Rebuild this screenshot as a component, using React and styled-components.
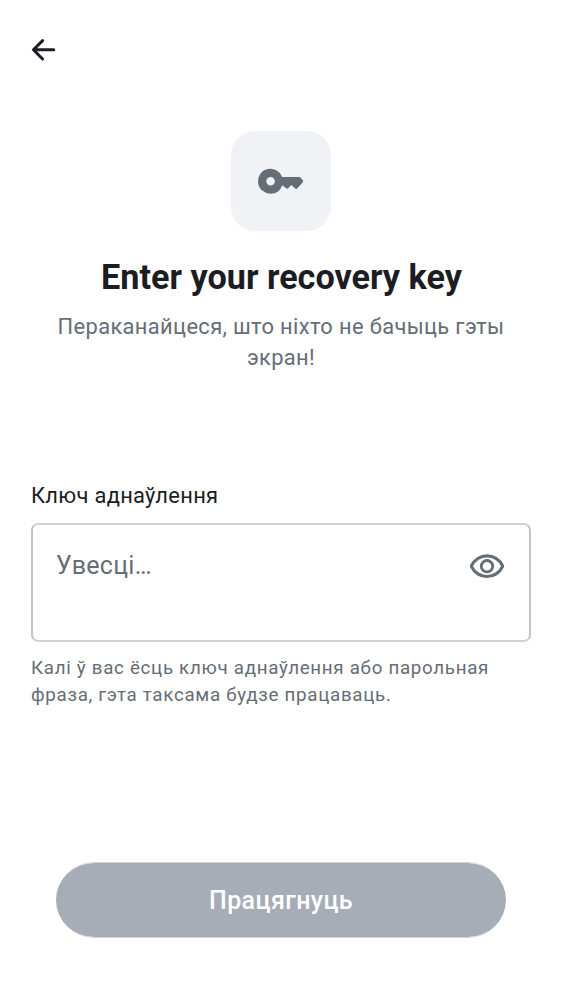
import React from 'react';
import styled, { createGlobalStyle } from 'styled-components';

const Global = createGlobalStyle`
  * { box-sizing: border-box; }
  body { margin: 0; background: #fff; font-family: Roboto, sans-serif; color: #1b1d22; }
  h1, p { margin: 0; }
`;

const Screen = styled.main`
  height: 1000px;
  display: flex;
  flex-direction: column;
  padding: 0 31px 62px;
`;

const TopBar = styled.header`
  height: 100px;
  display: flex;
  align-items: center;
`;

const BackButton = styled.button`
  border: 0;
  padding: 0;
  background: none;
  display: flex;
  color: #1b1d22;
`;

const Intro = styled.section`
  padding-top: 31px;
  display: flex;
  flex-direction: column;
  align-items: center;
  text-align: center;
`;

const IconTile = styled.div`
  width: 100px;
  height: 100px;
  border-radius: 24px;
  background: #f0f2f5;
  color: #656d77;
  display: grid;
  place-items: center;
`;

const Title = styled.h1`
  margin-top: 25px;
  padding-left: 1px;
  font-size: 34.2px;
  line-height: 43px;
  font-weight: 700;
  white-space: nowrap;
`;

const Subtitle = styled.p`
  margin-top: 12px;
  font-size: 21.9px;
  line-height: 31.25px;
  letter-spacing: 0.35px;
  color: #656d77;
  white-space: nowrap;
`;

const Field = styled.section`
  margin-top: 106px;
  display: flex;
  flex-direction: column;
`;

const Label = styled.label`
  font-size: 21.9px;
  line-height: 31px;
  letter-spacing: 0.3px;
`;

const InputBox = styled.div`
  margin-top: 12px;
  height: 119px;
  border: 2px solid;
  border-color: #cdd2da #bec4cf;
  border-radius: 7px;
  padding: 22px 23px;
  display: flex;
  justify-content: space-between;
  align-items: flex-start;
  color: #656d77;
`;

const Placeholder = styled.span`
  font-size: 25px;
  line-height: 38px;
  letter-spacing: 0.3px;
`;

const EyeIcon = styled.svg`
  margin-top: 1px;
`;

const Hint = styled.p`
  margin-top: 13px;
  font-size: 18.75px;
  line-height: 27px;
  letter-spacing: 0.7px;
  color: #656d77;
  white-space: nowrap;
`;

const ContinueButton = styled.button`
  margin: auto 25px 0;
  height: 76px;
  flex: none;
  border: solid #d2d6db;
  border-width: 1px 0;
  border-radius: 38px;
  background: #a6adb7;
  background-clip: padding-box;
  color: #fff;
  font: 500 25px/37px Roboto, sans-serif;
  letter-spacing: 0.38px;
`;

export default function App() {
  return (
    <>
      <Global />
      <Screen>
        <TopBar>
          <BackButton aria-label="Back">
            <svg width="26" height="26" viewBox="0 0 26 26" fill="none" stroke="currentColor" strokeWidth="3" strokeLinecap="round" strokeLinejoin="round">
              <path d="M11.6 3.6 2.4 12.8l9.2 9.2M2.6 12.8h20.2" />
              <path d="m2.4 12.8 3.6-3.6v7.2z" fill="currentColor" stroke="none" />
            </svg>
          </BackButton>
        </TopBar>
        <Intro>
          <IconTile>
            <svg width="50" height="50" viewBox="0 0 50 50" fill="currentColor">
              <path fillRule="evenodd" d="M14.6 37.7a12.5 12.5 0 1 1 11.6-16.8H42.9q.8 0 1.4.6l2.3 2.5q1.1 1.2 0 2.4l-5.2 5.8q-1.2 1.3-2.5.1L35.4 29.1l-3 3q-1.2 1-2.3.1l-3.4-2.7h-.5a12.5 12.5 0 0 1-11.6 8.2m0-8.2a4.3 4.3 0 1 0 0-8.6 4.3 4.3 0 0 0 0 8.6" />
            </svg>
          </IconTile>
          <Title>Enter your recovery key</Title>
          <Subtitle>Пераканайцеся, што ніхто не бачыць гэты<br />экран!</Subtitle>
        </Intro>
        <Field>
          <Label>Ключ аднаўлення</Label>
          <InputBox>
            <Placeholder>Увесці…</Placeholder>
            <EyeIcon width="38" height="38" viewBox="0 0 24 24" fill="currentColor">
              <path d="M12 16q1.875 0 3.188-1.312Q16.5 13.375 16.5 11.5t-1.312-3.187Q13.875 7 12 7T8.813 8.313 7.5 11.5t1.313 3.188Q10.125 16 12 16m0-1.8q-1.125 0-1.912-.787A2.6 2.6 0 0 1 9.3 11.5q0-1.125.787-1.912A2.6 2.6 0 0 1 12 8.8q1.125 0 1.912.787.788.788.788 1.913t-.787 1.912A2.6 2.6 0 0 1 12 14.2m0 4.8q-3.475 0-6.35-1.837Q2.775 15.324 1.3 12.2a.8.8 0 0 1-.1-.312 3 3 0 0 1 0-.775.8.8 0 0 1 .1-.313q1.475-3.125 4.35-4.962Q8.525 4 12 4t6.35 1.838T22.7 10.8a.8.8 0 0 1 .1.313 3 3 0 0 1 0 .774.8.8 0 0 1-.1.313q-1.475 3.125-4.35 4.963Q15.475 19 12 19m0-2a9.54 9.54 0 0 0 5.188-1.488A9.77 9.77 0 0 0 20.8 11.5a9.77 9.77 0 0 0-3.612-4.012A9.54 9.54 0 0 0 12 6a9.54 9.54 0 0 0-5.188 1.487A9.77 9.77 0 0 0 3.2 11.5a9.77 9.77 0 0 0 3.612 4.012A9.54 9.54 0 0 0 12 17" />
            </EyeIcon>
          </InputBox>
          <Hint>Калі ў вас ёсць ключ аднаўлення або парольная<br />фраза, гэта таксама будзе працаваць.</Hint>
        </Field>
        <ContinueButton>Працягнуць</ContinueButton>
      </Screen>
    </>
  );
}
